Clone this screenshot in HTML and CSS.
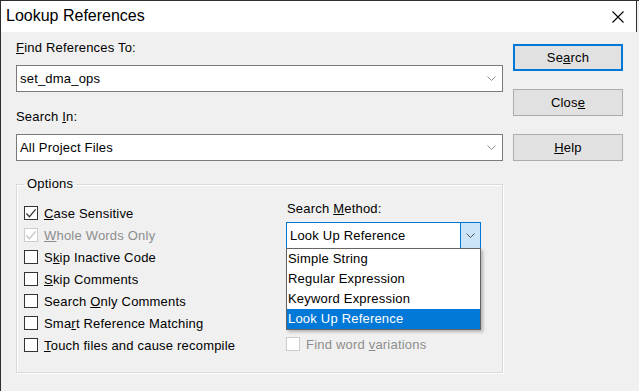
FILE: index.html
```html
<!DOCTYPE html>
<html>

<head>
    <meta charset="UTF-8">
    <title>Lookup References</title>
    <link rel="stylesheet" href="styles.css">
</head>

<body>
    <div class="window">
        <div class="titlebar">
            <span class="title">Lookup References</span>
            <svg class="close-x" width="12" height="12" viewBox="0 0 12 12">
                <path d="M0.5 0.5 L11.5 11.5 M11.5 0.5 L0.5 11.5" stroke="#000" stroke-width="1.1" fill="none"/>
            </svg>
        </div>

        <div class="content">
            <div class="main">
                <div class="label"><u>F</u>ind References To:</div>
                <div class="combo">
                    <span class="combo-text">set_dma_ops</span>
                    <svg class="chevron" width="9" height="5" viewBox="0 0 9 5"><path d="M0.5 0.5 L4.5 4.5 L8.5 0.5" stroke="#8a8a8a" fill="none"/></svg>
                </div>

                <div class="label gap-top">Search <u>I</u>n:</div>
                <div class="combo">
                    <span class="combo-text">All Project Files</span>
                    <svg class="chevron" width="9" height="5" viewBox="0 0 9 5"><path d="M0.5 0.5 L4.5 4.5 L8.5 0.5" stroke="#8a8a8a" fill="none"/></svg>
                </div>

                <fieldset class="group">
                    <legend>Options</legend>
                    <div class="group-cols">
                        <div class="checks">
                            <div class="check-row">
                                <span class="box"><svg width="13" height="13" viewBox="0 0 13 13"><path d="M1.5 6.5 L4.8 10 L11.5 2" stroke="#333" stroke-width="1.3" fill="none"/></svg></span>
                                <span><u>C</u>ase Sensitive</span>
                            </div>
                            <div class="check-row disabled">
                                <span class="box"><svg width="13" height="13" viewBox="0 0 13 13"><path d="M1.5 6.5 L4.8 10 L11.5 2" stroke="#c2c2c2" stroke-width="1.3" fill="none"/></svg></span>
                                <span><u>W</u>hole Words Only</span>
                            </div>
                            <div class="check-row">
                                <span class="box"></span>
                                <span>S<u>k</u>ip Inactive Code</span>
                            </div>
                            <div class="check-row">
                                <span class="box"></span>
                                <span><u>S</u>kip Comments</span>
                            </div>
                            <div class="check-row">
                                <span class="box"></span>
                                <span>Search <u>O</u>nly Comments</span>
                            </div>
                            <div class="check-row">
                                <span class="box"></span>
                                <span>Sma<u>r</u>t Reference Matching</span>
                            </div>
                            <div class="check-row">
                                <span class="box"></span>
                                <span><u>T</u>ouch files and cause recompile</span>
                            </div>
                        </div>

                        <div class="method">
                            <div class="label">Search <u>M</u>ethod:</div>
                            <div class="method-wrap">
                                <div class="combo focused">
                                    <span class="combo-text">Look Up Reference</span>
                                    <span class="drop-btn">
                                        <svg width="9" height="5" viewBox="0 0 9 5"><path d="M0.5 0.5 L4.5 4.5 L8.5 0.5" stroke="#505050" fill="none"/></svg>
                                    </span>
                                </div>
                                <ul class="drop-list">
                                    <li>Simple String</li>
                                    <li>Regular Expression</li>
                                    <li>Keyword Expression</li>
                                    <li class="selected">Look Up Reference</li>
                                </ul>
                            </div>
                            <div class="check-row disabled variations">
                                <span class="box"></span>
                                <span>Find word <u>v</u>ariations</span>
                            </div>
                        </div>
                    </div>
                </fieldset>
            </div>

            <div class="buttons">
                <button class="btn default">Se<u>a</u>rch</button>
                <button class="btn">Clos<u>e</u></button>
                <button class="btn"><u>H</u>elp</button>
            </div>
        </div>
    </div>
</body>

</html>
```

FILE: styles.css
```css
body {
    margin: 0;
    background-color: #f0f0f0;
    font-family: 'Liberation Sans', Arial, sans-serif;
    font-size: 13px;
    letter-spacing: 0.2px;
    color: #000;
}

.window {
    width: 638px;
    height: 390px;
    border-left: 1px solid #2e2e2e;
    border-top: 1px solid #2e2e2e;
    background-color: #f0f0f0;
    overflow: hidden;
}

.titlebar {
    width: 635px;
    height: 31px;
    background-color: #fff;
    border-right: 1px solid #2e2e2e;
    display: flex;
    align-items: center;
    justify-content: space-between;
}

.title {
    font-size: 16px;
    letter-spacing: 0;
    margin-left: 5px;
    margin-top: -1px;
}

.close-x {
    margin-right: 12px;
    margin-top: 1px;
}

.content {
    display: flex;
    padding: 8px 0 0 15px;
}

.main {
    width: 487px;
    display: flex;
    flex-direction: column;
}

.label {
    height: 16px;
    line-height: 16px;
}

.gap-top {
    margin-top: 17px;
}

.combo {
    height: 25px;
    margin-top: 9px;
    background-color: #fff;
    border: 1px solid #7a7a7a;
    display: flex;
    align-items: center;
    justify-content: space-between;
}

.combo-text {
    padding-left: 3px;
}

.chevron {
    margin-right: 6px;
}

.group {
    box-sizing: border-box;
    margin: 15px 0 0 0;
    padding: 10px 0 0 7px;
    height: 197px;
    border: 1px solid #d9d9d9;
    box-shadow: inset 1px 1px 0 #fff, 1px 1px 0 #fff;
}

.group legend {
    padding: 0 3px;
    height: 16px;
    line-height: 16px;
}

.group-cols {
    display: flex;
}

.checks {
    width: 262px;
}

.check-row {
    height: 22px;
    display: flex;
    align-items: center;
}

.box {
    width: 12px;
    height: 12px;
    border: 1px solid #333;
    background-color: #fff;
    margin-right: 6px;
    display: flex;
    align-items: center;
    justify-content: center;
}

.check-row.disabled {
    color: #8d8d8d;
}

.check-row.disabled .box {
    border-color: #cccccc;
}

.method {
    width: 195px;
}

.method .label {
    margin-left: 1px;
    margin-top: -1px;
}

.method-wrap {
    position: relative;
}

.combo.focused {
    margin-top: 5px;
    border-color: #0078d7;
    align-items: stretch;
}

.combo.focused .combo-text {
    display: flex;
    align-items: center;
}

.drop-btn {
    width: 19px;
    background-color: #cce4f7;
    border-left: 1px solid #0078d7;
    display: flex;
    align-items: center;
    justify-content: center;
}

.drop-list {
    position: absolute;
    top: 26px;
    left: 0;
    width: 193px;
    margin: 0;
    padding: 0;
    list-style: none;
    background-color: #fff;
    border: 1px solid #646464;
    box-shadow: 2px 2px 3px rgba(0, 0, 0, 0.25);
}

.drop-list li {
    height: 20px;
    line-height: 20px;
    padding-left: 1px;
}

.drop-list li.selected {
    background-color: #0078d7;
    color: #fff;
}

.variations {
    margin-top: 84px;
}

.buttons {
    margin-left: 10px;
    margin-top: 4px;
    display: flex;
    flex-direction: column;
    gap: 18px;
}

.btn {
    width: 110px;
    height: 27px;
    padding: 0;
    font-family: 'Liberation Sans', Arial, sans-serif;
    font-size: 13px;
    letter-spacing: 0.2px;
    color: #000;
    background-color: #e1e1e1;
    border: 1px solid #adadad;
}

.btn.default {
    border: 2px solid #0078d7;
}
```
